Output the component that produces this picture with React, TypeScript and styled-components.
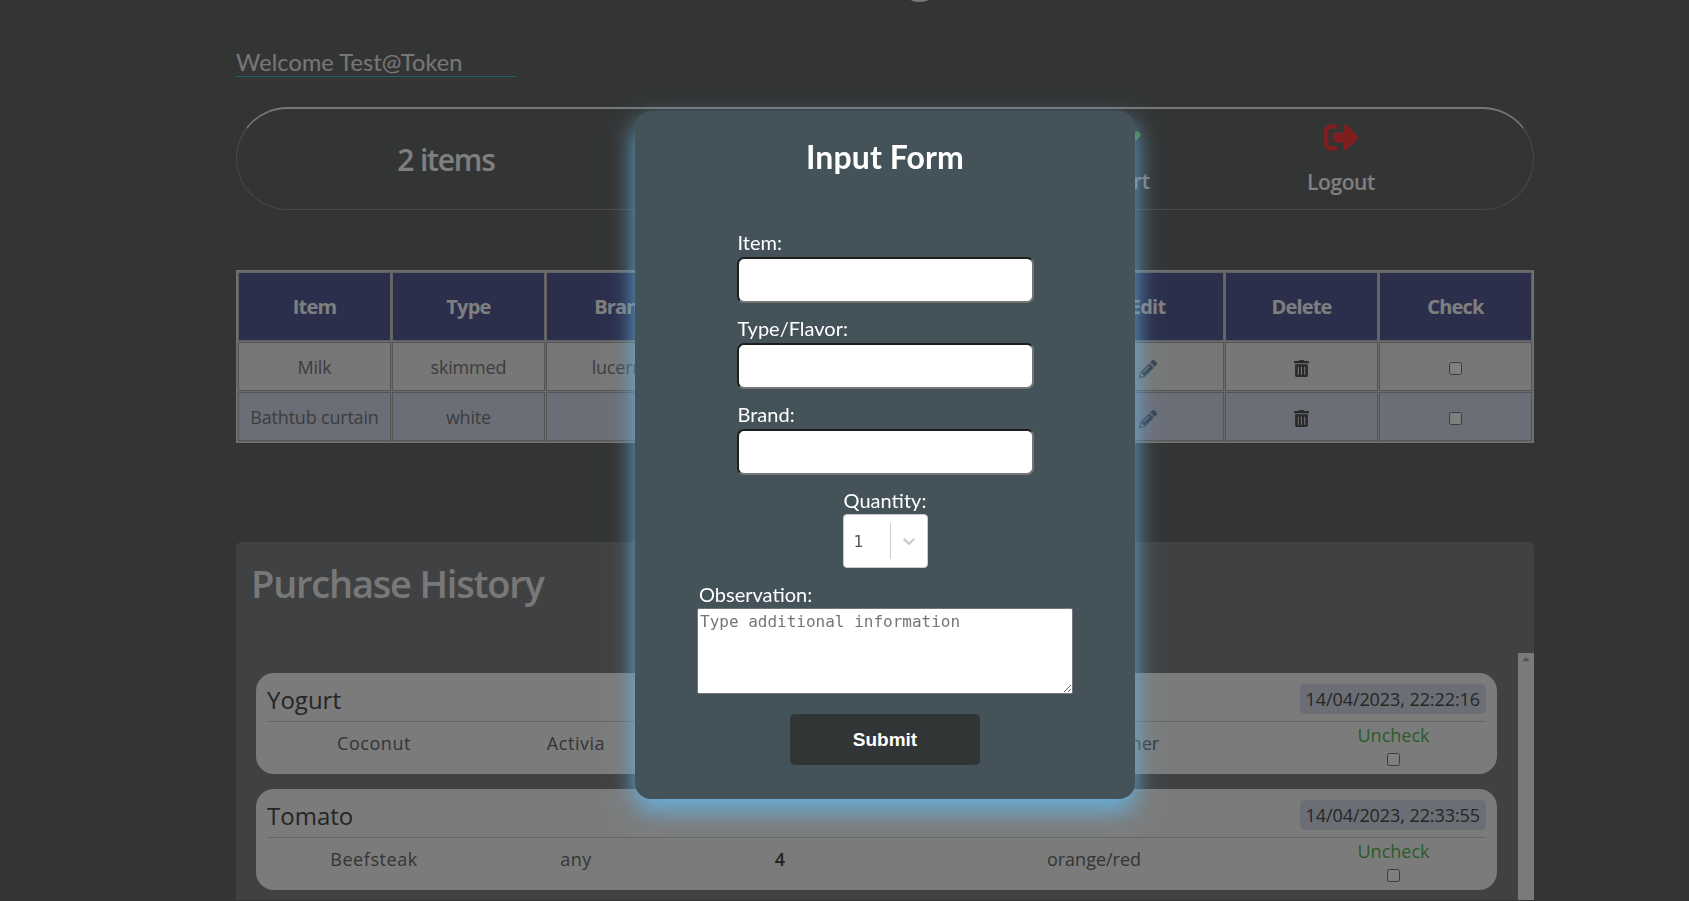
import React from "react";
import styled, { createGlobalStyle } from "styled-components";
import { FaSignOutAlt, FaCheck, FaPencilAlt, FaTrashAlt, FaCaretUp } from "react-icons/fa";

const Global = createGlobalStyle`
  html, body { margin: 0; padding: 0; height: 100%; overflow: hidden; }
  body { background: #676a6a; font-family: "Open Sans", "Liberation Sans", sans-serif; }
  * { box-sizing: border-box; }
`;

const Page = styled.div`
  width: 1298px;
  margin-left: 236px;
  display: flex;
  flex-direction: column;
`;
const PageTitle = styled.h1`
  margin: -58px 0 0 0;
  height: 100px;
  padding-left: 18px;
  line-height: 60px;
  font-size: 48px;
  font-weight: 600;
  text-align: center;
  color: #eee;
`;
const Welcome = styled.div`
  width: 280px;
  height: 35px;
  padding-top: 5px;
  border-bottom: 1px solid #3dc0dc;
  font-family: "Lato", sans-serif;
  font-size: 23.5px;
  letter-spacing: 0.12px;
  line-height: 31px;
  color: #eee;
`;
const NavBar = styled.div`
  margin-top: 30px;
  height: 103px;
  border-radius: 62px;
  border-top: 2px solid #eee;
  border-bottom: 1px solid #909090;
  border-left: 1px solid #909090;
  border-right: 1px solid #909090;
  display: flex;
  align-items: center;
  padding-right: 88px;
`;
const Count = styled.div`
  width: 418px;
  text-align: center;
  font-size: 30px;
  font-weight: 600;
  letter-spacing: -1.2px;
  color: #fff;
`;
const NavSpacer = styled.div`
  flex: 1;
`;
const NavItem = styled.div<{ $tint: string; $w: number }>`
  width: ${(p) => p.$w}px;
  display: flex;
  flex-direction: column;
  align-items: center;
  gap: 13px;
  margin-top: -2px;
  font-size: 21px;
  font-weight: 600;
  letter-spacing: -0.4px;
  color: #fff;
  svg { color: ${(p) => p.$tint}; display: block; }
`;
const CheckMark = styled(FaCheck)`
  margin: 5px 8px -5px 0;
`;
const Table = styled.table`
  margin-top: 60px;
  width: 100%;
  table-layout: fixed;
  border-collapse: separate;
  border-spacing: 1px;
  background: #d4d4d4;
  border: 1px solid #e4e4e4;
`;
const Th = styled.th<{ $w: number }>`
  height: 69px;
  background: #565e98;
  border: 1px solid #c4c4c4;
  font-size: 20px;
  font-weight: 700;
  letter-spacing: -0.8px;
  color: #fff;
  width: ${(p) => p.$w}px;
`;
const Row = styled.tr<{ $alt?: boolean }>`
  background: ${(p) => (p.$alt ? "#d7dcef" : "#eee")};
`;
const Td = styled.td`
  height: 49px;
  padding: 0;
  border: 1px solid #aaa;
  text-align: center;
  font-size: 18px;
  letter-spacing: -0.2px;
  color: #7a7a7a;
  svg { display: inline-block; vertical-align: middle; }
`;
const PencilCell = styled(Td)`
  svg { color: #6a86a0; }
`;
const TrashCell = styled(Td)`
  svg { color: #555; }
`;
const Box = styled.input.attrs({ type: "checkbox" })`
  margin: 0;
  display: inline-block;
  vertical-align: middle;
`;
const History = styled.section`
  margin-top: 99px;
  height: 358px;
  background: #808284;
  border-radius: 6px 6px 0 0;
  position: relative;
  padding: 0 0 0 20px;
`;
const HistoryTitle = styled.h2`
  margin: 0 0 0 -5px;
  height: 131px;
  padding-top: 15px;
  font-size: 38px;
  line-height: 52px;
  font-weight: 600;
  letter-spacing: -1.2px;
  color: #f0f0f0;
`;
const CardList = styled.div`
  display: flex;
  flex-direction: column;
  gap: 15px;
  width: 1241px;
`;
const Card = styled.article`
  height: 101px;
  border-radius: 18px;
  background: #f6f6f6;
  padding: 11px 11px 0 11px;
`;
const CardHead = styled.header`
  height: 38px;
  border-bottom: 1px solid #ccc;
  display: flex;
  justify-content: space-between;
  align-items: flex-start;
`;
const CardName = styled.span`
  font-size: 24px;
  line-height: 32px;
  font-weight: 500;
  color: #4a4a4a;
`;
const DateChip = styled.span`
  background: #d6dce8;
  border-radius: 5px;
  height: 30px;
  padding: 0 6px;
  line-height: 30px;
  font-size: 18px;
  letter-spacing: -0.08px;
  color: #4c4c4c;
`;
const CardBody = styled.div`
  display: grid;
  grid-template-columns: 214px 190px 218px 410px 189px;
  align-items: center;
  text-align: center;
  height: 31px;
  margin-top: -3px;
  font-size: 18px;
`;
const Cell = styled.span<{ $loose?: boolean }>`
  color: #6a6a6a;
  letter-spacing: ${(p) => (p.$loose ? "0.55px" : "0")};
`;
const Qty = styled.span`
  font-weight: 600;
  color: #444;
`;
const UncheckCol = styled.div`
  display: flex;
  flex-direction: column;
  align-items: center;
  gap: 6px;
  color: #55b855;
  line-height: 24px;
  margin-top: 4px;
`;
const Scroller = styled.div`
  position: absolute;
  right: 0;
  top: 111px;
  bottom: 0;
  width: 16px;
  background: #f4f4f4;
  display: flex;
  justify-content: center;
  color: #a8a8a8;
`;
const Overlay = styled.div`
  position: fixed;
  inset: 0;
  background: rgba(0, 0, 0, 0.5);
`;
const Modal = styled.form`
  position: absolute;
  left: 635px;
  top: 111px;
  width: 500px;
  height: 688px;
  border-radius: 16px;
  background: #445259;
  box-shadow: 0 12px 24px #68b0da;
  display: flex;
  flex-direction: column;
  align-items: center;
  font-family: "Lato", sans-serif;
  color: #fff;
`;
const ModalTitle = styled.h2`
  margin: 20px 0 0;
  height: 52px;
  line-height: 52px;
  font-size: 32px;
  font-weight: 700;
  letter-spacing: 0.1px;
`;
const Fields = styled.div`
  margin-top: 48px;
  display: flex;
  flex-direction: column;
  gap: 14px;
  width: 297px;
`;
const Field = styled.label`
  display: flex;
  flex-direction: column;
  font-size: 20px;
  line-height: 22px;
  padding-left: 1px;
`;
const TextInput = styled.input`
  display: block;
  margin: 4px 0 0 -1px;
  width: 297px;
  height: 46px;
  background: #fff;
  border-width: 2px;
  border-style: solid;
  border-color: #1e1e1e #767676 #767676 #1e1e1e;
  border-radius: 7px;
`;
const QtyLabel = styled.div`
  margin-top: 12px;
  font-size: 20px;
  line-height: 27px;
`;
const SelectBox = styled.div`
  width: 85px;
  height: 54px;
  background: #fff;
  border-radius: 4px;
  border: 1px solid #ccc;
  display: flex;
  align-items: center;
  font-family: "DejaVu Sans Mono", monospace;
  font-size: 16px;
  color: #555;
`;
const SelectValue = styled.span`
  width: 46px;
  padding-left: 10px;
`;
const SelectSep = styled.span`
  width: 1px;
  height: 36px;
  background: #ccc;
`;
const SelectArrow = styled.span`
  flex: 1;
  display: flex;
  justify-content: center;
  color: #ccc;
`;
const ObsField = styled.label`
  margin-top: 13px;
  width: 376px;
  display: flex;
  flex-direction: column;
  font-size: 20px;
  line-height: 27px;
`;
const ObsCaption = styled.span`
  padding-left: 2px;
`;
const ObsArea = styled.textarea`
  display: block;
  width: 376px;
  height: 86px;
  margin: 0;
  padding: 4px 2px 2px;
  border: 1px solid #767676;
  border-radius: 2px;
  background: #fff;
  font-family: "DejaVu Sans Mono", monospace;
  font-size: 16px;
  line-height: 18px;
  &::placeholder { color: #757575; }
`;
const Submit = styled.button`
  margin-top: 20px;
  width: 190px;
  height: 51px;
  border: 0;
  border-radius: 5px;
  background: #313536;
  color: #fff;
  font-family: "Liberation Sans", sans-serif;
  font-weight: 700;
  font-size: 19px;
`;

const columns = [
  ["Item", 152], ["Type", 152], ["Brand", 152], ["Quantity", 152], ["Observation", 215], ["Edit", 152], ["Delete", 152], ["Check", 152],
] as const;

const rows = [
  { item: "Milk", type: "skimmed", brand: "lucerne", qty: "2", obs: "" },
  { item: "Bathtub curtain", type: "white", brand: "", qty: "1", obs: "" },
];

const purchases = [
  { name: "Yogurt", date: "14/04/2023, 22:22:16", flavor: "Coconut", brand: "Activia", qty: "2", obs: "Small container" },
  { name: "Tomato", date: "14/04/2023, 22:33:55", flavor: "Beefsteak", brand: "any", qty: "4", obs: "orange/red" },
];

export default function App() {
  return (
    <>
      <Global />
      <Page>
        <PageTitle>All Listing Items</PageTitle>
        <Welcome>Welcome Test@Token</Welcome>
        <NavBar>
          <Count>2 items</Count>
          <NavSpacer />
          <NavItem $tint="#94f474" $w={216}>
            <CheckMark size={32} />
            Cart
          </NavItem>
          <NavItem $tint="#fa3e3e" $w={208}>
            <FaSignOutAlt size={35} />
            Logout
          </NavItem>
        </NavBar>
        <Table>
          <thead>
            <tr>
              {columns.map(([label, w]) => (
                <Th key={label} $w={w}>{label}</Th>
              ))}
            </tr>
          </thead>
          <tbody>
            {rows.map((r, i) => (
              <Row key={r.item} $alt={i === 1}>
                <Td>{r.item}</Td>
                <Td>{r.type}</Td>
                <Td>{r.brand}</Td>
                <Td>{r.qty}</Td>
                <Td>{r.obs}</Td>
                <PencilCell><FaPencilAlt size={18} /></PencilCell>
                <TrashCell><FaTrashAlt size={17} /></TrashCell>
                <Td><Box /></Td>
              </Row>
            ))}
          </tbody>
        </Table>
        <History>
          <HistoryTitle>Purchase History</HistoryTitle>
          <CardList>
            {purchases.map((p) => (
              <Card key={p.name}>
                <CardHead>
                  <CardName>{p.name}</CardName>
                  <DateChip>{p.date}</DateChip>
                </CardHead>
                <CardBody>
                  <Cell $loose>{p.flavor}</Cell>
                  <Cell $loose>{p.brand}</Cell>
                  <Qty>{p.qty}</Qty>
                  <Cell>{p.obs}</Cell>
                  <UncheckCol>
                    Uncheck
                    <Box />
                  </UncheckCol>
                </CardBody>
              </Card>
            ))}
          </CardList>
          <Scroller>
            <FaCaretUp size={12} />
          </Scroller>
        </History>
      </Page>
      <Overlay>
        <Modal>
          <ModalTitle>Input Form</ModalTitle>
          <Fields>
            <Field>Item:<TextInput /></Field>
            <Field>Type/Flavor:<TextInput /></Field>
            <Field>Brand:<TextInput /></Field>
          </Fields>
          <QtyLabel>Quantity:</QtyLabel>
          <SelectBox>
            <SelectValue>1</SelectValue>
            <SelectSep />
            <SelectArrow>
              <svg width="20" height="20" viewBox="0 0 20 20" fill="currentColor">
                <path d="M4.516 7.548c0.436-0.446 1.043-0.481 1.576 0l3.908 3.747 3.908-3.747c0.533-0.481 1.141-0.446 1.574 0 0.436 0.445 0.408 1.197 0 1.615-0.406 0.418-4.695 4.502-4.695 4.502-0.217 0.223-0.502 0.335-0.787 0.335s-0.57-0.112-0.789-0.335c0 0-4.287-4.084-4.695-4.502s-0.436-1.17 0-1.615z" />
              </svg>
            </SelectArrow>
          </SelectBox>
          <ObsField>
            <ObsCaption>Observation:</ObsCaption>
            <ObsArea placeholder="Type additional information" />
          </ObsField>
          <Submit type="button">Submit</Submit>
        </Modal>
      </Overlay>
    </>
  );
}
